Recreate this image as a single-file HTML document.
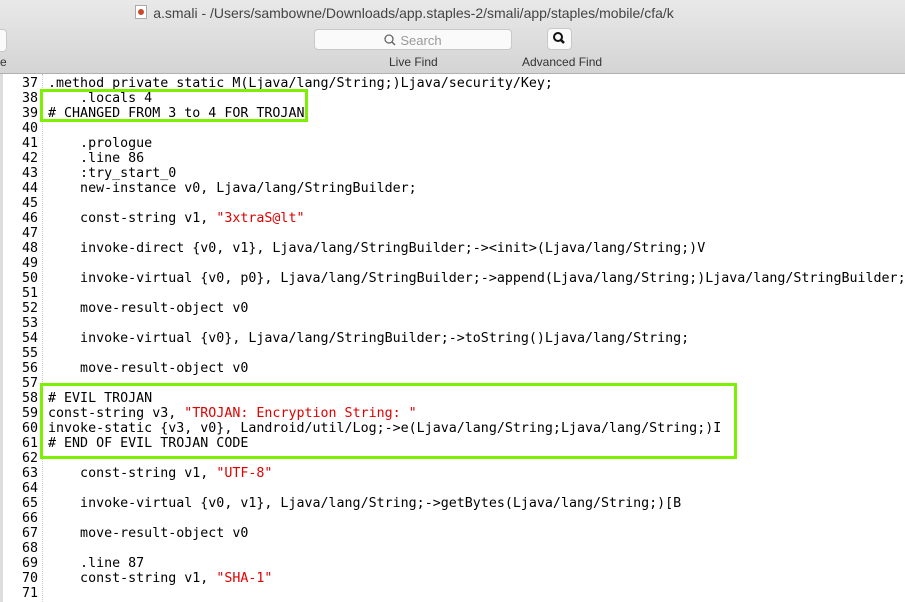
<!DOCTYPE html>
<html><head><style>
body{margin:0;width:905px;height:602px;overflow:hidden;background:#fff;position:relative;font-family:"Liberation Sans",sans-serif}
.tb{position:absolute;left:0;top:0;width:905px;height:73px;background:linear-gradient(#e9e9e9,#d4d4d4);border-bottom:1px solid #b0b0b0}
.title{position:absolute;top:5px;left:-48px;width:905px;text-align:center;font-size:14px;color:#444}
.title span.ic{display:inline-block;width:10px;height:12px;background:#fff;border:1px solid #aaa;vertical-align:-1px;margin-right:6px;position:relative}
.title span.ic:after{content:"";position:absolute;left:2px;top:3px;width:6px;height:6px;border-radius:50%;background:#c94a2a}
.search{position:absolute;left:314px;top:29px;width:198px;height:21px;background:#fafafa;border:1px solid #c8c8c8;border-radius:4px;text-align:center;font-size:13px;color:#999;line-height:21px;box-sizing:border-box}
.adv{position:absolute;left:547px;top:28px;width:25px;height:22px;background:#fafafa;border:1px solid #c8c8c8;border-radius:4px;box-sizing:border-box}
.lbl{position:absolute;top:55px;font-size:12px;color:#333}
.leftbtn{position:absolute;left:-6px;top:29px;width:11px;height:21px;background:#fafafa;border:1px solid #c8c8c8;border-radius:4px}
.gut{position:absolute;left:0;top:74px;width:42px;height:528px;border-right:1px dotted #ccc;background:#fff}
.strip{position:absolute;left:0;top:74px;width:3px;height:528px;background:#ddd}
.code{position:absolute;left:0;top:76px;font-family:"DejaVu Sans Mono",monospace;font-size:13.32px;line-height:15px;white-space:pre;color:#000}
.n{display:inline-block;width:38px;text-align:right;margin-right:10px}
.s{color:#e00000}
.box{position:absolute;border:3px solid #7cf000}
</style></head><body>
<div class="tb">
<div class="title"><span class="ic"></span>a.smali - /Users/sambowne/Downloads/app.staples-2/smali/app/staples/mobile/cfa/k</div>
<div class="leftbtn"></div>
<div class="lbl" style="left:0">e</div>
<div class="search"><svg width="12" height="12" viewBox="0 0 12 12" style="vertical-align:-1px;margin-right:4px"><circle cx="5" cy="5" r="4" fill="none" stroke="#666" stroke-width="1.3"/><line x1="8" y1="8" x2="11" y2="11" stroke="#666" stroke-width="1.5"/></svg>Search</div>
<div class="adv"><svg width="23" height="20" viewBox="0 0 23 20"><circle cx="10" cy="8" r="4" fill="none" stroke="#111" stroke-width="2"/><line x1="13" y1="11" x2="16" y2="14" stroke="#111" stroke-width="2.5"/></svg></div>
<div class="lbl" style="left:389px">Live Find</div>
<div class="lbl" style="left:522px">Advanced Find</div>
</div>
<div class="gut"></div><div class="strip"></div>
<div class="code"><span class="n">37</span>.method private static M(Ljava/lang/String;)Ljava/security/Key;
<span class="n">38</span>    .locals 4
<span class="n">39</span># CHANGED FROM 3 to 4 FOR TROJAN
<span class="n">40</span>
<span class="n">41</span>    .prologue
<span class="n">42</span>    .line 86
<span class="n">43</span>    :try_start_0
<span class="n">44</span>    new-instance v0, Ljava/lang/StringBuilder;
<span class="n">45</span>
<span class="n">46</span>    const-string v1, <span class="s">"3xtraS@lt"</span>
<span class="n">47</span>
<span class="n">48</span>    invoke-direct {v0, v1}, Ljava/lang/StringBuilder;-&gt;&lt;init&gt;(Ljava/lang/String;)V
<span class="n">49</span>
<span class="n">50</span>    invoke-virtual {v0, p0}, Ljava/lang/StringBuilder;-&gt;append(Ljava/lang/String;)Ljava/lang/StringBuilder;
<span class="n">51</span>
<span class="n">52</span>    move-result-object v0
<span class="n">53</span>
<span class="n">54</span>    invoke-virtual {v0}, Ljava/lang/StringBuilder;-&gt;toString()Ljava/lang/String;
<span class="n">55</span>
<span class="n">56</span>    move-result-object v0
<span class="n">57</span>
<span class="n">58</span># EVIL TROJAN
<span class="n">59</span>const-string v3, <span class="s">"TROJAN: Encryption String: "</span>
<span class="n">60</span>invoke-static {v3, v0}, Landroid/util/Log;-&gt;e(Ljava/lang/String;Ljava/lang/String;)I
<span class="n">61</span># END OF EVIL TROJAN CODE
<span class="n">62</span>
<span class="n">63</span>    const-string v1, <span class="s">"UTF-8"</span>
<span class="n">64</span>
<span class="n">65</span>    invoke-virtual {v0, v1}, Ljava/lang/String;-&gt;getBytes(Ljava/lang/String;)[B
<span class="n">66</span>
<span class="n">67</span>    move-result-object v0
<span class="n">68</span>
<span class="n">69</span>    .line 87
<span class="n">70</span>    const-string v1, <span class="s">"SHA-1"</span>
<span class="n">71</span>
</div>
<div class="box" style="left:40px;top:89px;width:262px;height:27px"></div>
<div class="box" style="left:40px;top:383px;width:691px;height:70px"></div>
</body></html>
